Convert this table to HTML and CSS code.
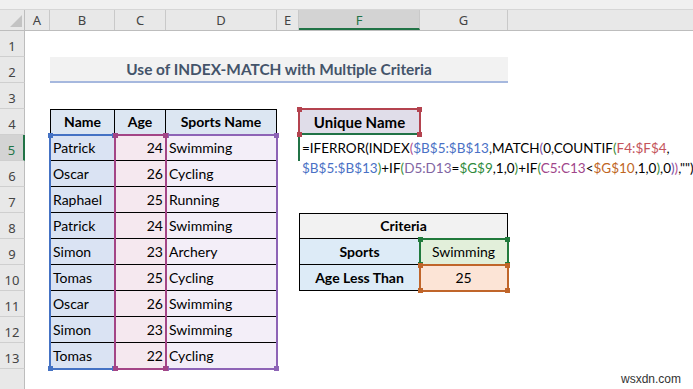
FILE: index.html
```html
<!DOCTYPE html>
<html lang="en">
  <head>
    <meta charset="UTF-8" />
    <meta name="viewport" content="width=device-width, initial-scale=1.0" />
    <title>INDEX-MATCH with Multiple Criteria</title>
    <link rel="stylesheet" href="styles.css">
  </head>
  <body>
    <div class="sheet">
      <div class="strip"></div>
      <div class="corner"></div>

      <div class="colheads">
        <div class="colhead col-a">A</div>
        <div class="colhead col-b">B</div>
        <div class="colhead col-c">C</div>
        <div class="colhead col-d">D</div>
        <div class="colhead col-e">E</div>
        <div class="colhead col-f current">F</div>
        <div class="colhead col-g">G</div>
      </div>

      <div class="rowheads">
        <div class="rowhead">1</div>
        <div class="rowhead">2</div>
        <div class="rowhead">3</div>
        <div class="rowhead">4</div>
        <div class="rowhead current">5</div>
        <div class="rowhead">6</div>
        <div class="rowhead">7</div>
        <div class="rowhead">8</div>
        <div class="rowhead">9</div>
        <div class="rowhead">10</div>
        <div class="rowhead">11</div>
        <div class="rowhead">12</div>
        <div class="rowhead">13</div>
        <div class="rowhead rest"></div>
      </div>

      <div class="cells">
        <div class="title">Use of INDEX-MATCH with Multiple Criteria</div>

        <div class="data">
          <div class="th first">Name</div><div class="th">Age</div><div class="th">Sports Name</div>
          <div class="td name">Patrick</div><div class="td age">24</div><div class="td sport">Swimming</div>
          <div class="td name">Oscar</div><div class="td age">26</div><div class="td sport">Cycling</div>
          <div class="td name">Raphael</div><div class="td age">25</div><div class="td sport">Running</div>
          <div class="td name">Patrick</div><div class="td age">24</div><div class="td sport">Swimming</div>
          <div class="td name">Simon</div><div class="td age">23</div><div class="td sport">Archery</div>
          <div class="td name">Tomas</div><div class="td age">25</div><div class="td sport">Cycling</div>
          <div class="td name">Oscar</div><div class="td age">26</div><div class="td sport">Swimming</div>
          <div class="td name">Simon</div><div class="td age">23</div><div class="td sport">Swimming</div>
          <div class="td name">Tomas</div><div class="td age">22</div><div class="td sport">Cycling</div>
          <div class="range range-b"></div>
          <div class="range range-d"></div>
          <div class="range range-c"></div>
        </div>

        <div class="unique">Unique Name</div>
        <div class="formula">=IFERROR(INDEX<span class="p-pink">(</span><span class="ref-blue">$B$5:$B$13</span>,MATCH<span class="p-purple">(</span>0,COUNTIF<span class="p-green">(</span><span class="ref-red">F4:$F$4</span>,<br><span class="ref-blue">$B$5:$B$13</span><span class="p-green">)</span>+IF<span class="p-green">(</span><span class="ref-purple">D5:D13</span>=<span class="ref-green">$G$9</span>,1,0<span class="p-green">)</span>+IF<span class="p-green">(</span><span class="ref-magenta">C5:C13</span>&lt;<span class="ref-orange">$G$10</span>,1,0<span class="p-green">)</span>,0<span class="p-purple">)</span><span class="p-pink">)</span>,"")</div>
        <div class="active-cell"></div>
        <div class="range range-unique"></div>

        <div class="criteria">
          <div class="cr-head">Criteria</div>
          <div class="cr-label">Sports</div><div class="cr-value sport-value">Swimming</div>
          <div class="cr-label">Age Less Than</div><div class="cr-value age-value">25</div>
          <div class="range range-g9"></div>
          <div class="range range-g10"></div>
        </div>
      </div>

      <div class="watermark">wsxdn.com</div>
    </div>
  </body>
</html>
```

FILE: styles.css
```css
* {
  box-sizing: border-box;
}
body {
  margin: 0;
  background: #fff;
  font-family: Lato, "Open Sans", sans-serif;
  color: #000;
}
.sheet {
  position: relative;
  display: grid;
  grid-template-columns: 25px 1fr;
  grid-template-rows: 10px 21px 1fr;
  width: 693px;
  height: 389px;
  overflow: hidden;
}
.strip {
  grid-column: 1 / -1;
  background: #f0f0f0;
  border-bottom: 1px solid #d6d6d6;
}
.corner {
  position: relative;
  background: #e8e8e8;
  border-right: 1px solid #bdbdbd;
  border-bottom: 1px solid #bdbdbd;
}
.corner::after {
  content: "";
  position: absolute;
  right: 2px;
  bottom: 3px;
  border-left: 12px solid transparent;
  border-bottom: 12px solid #c3c3c3;
}

/* column letters */
.colheads {
  display: flex;
  background: #e8e8e8;
  border-bottom: 1px solid #bdbdbd;
}
.colhead {
  border-right: 1px solid #c9c9c9;
  text-align: center;
  font-family: "Noto Sans", sans-serif;
  font-size: 13px;
  line-height: 20px;
  color: #444;
}
.col-a { width: 25px; }
.col-b { width: 65px; }
.col-c { width: 51px; }
.col-d { width: 111px; }
.col-e { width: 22px; }
.col-f { width: 121px; }
.col-g { width: 88px; }
.colhead.current {
  background: #d3d3d3;
  border-bottom: 2px solid #217346;
  color: #217346;
}

/* row numbers */
.rowheads {
  display: flex;
  flex-direction: column;
  background: #e8e8e8;
}
.rowhead {
  height: 26px;
  flex: none;
  padding-top: 5px;
  border-right: 1px solid #bdbdbd;
  border-bottom: 1px solid #cfcfcf;
  text-align: center;
  font-family: "Noto Sans", sans-serif;
  font-size: 13px;
  line-height: 20px;
  color: #444;
}
.rowhead.current {
  background: #d3d3d3;
  border-right: 2px solid #217346;
  color: #217346;
}
.rowhead.rest {
  flex: 1;
  border-bottom: none;
}

/* worksheet area */
.cells {
  position: relative;
  display: grid;
  grid-template-columns: 25px 65px 51px 111px 22px 121px 88px 1fr;
  grid-template-rows: repeat(13, 26px) 1fr;
  font-size: 14px;
}
.title {
  grid-column: 2 / 8;
  grid-row: 2 / 3;
  background: #f2f2f2;
  border-bottom: 2px solid #a6b8de;
  color: #44546a;
  font-weight: 700;
  font-size: 15.4px;
  text-align: center;
  line-height: 25px;
}

.data {
  grid-column: 2 / 5;
  grid-row: 4 / 14;
  position: relative;
  display: grid;
  grid-template-columns: 65px 51px 111px;
  grid-template-rows: repeat(10, 26px);
}
.th {
  background: #dce6f2;
  border-top: 1px solid #000;
  border-right: 1px solid #000;
  border-bottom: 1px solid #000;
  font-weight: 700;
  text-align: center;
  line-height: 24px;
}
.th.first {
  border-left: 1px solid #000;
}
.td {
  border-right: 1px solid #000;
  border-bottom: 1px solid #000;
  line-height: 25px;
  white-space: nowrap;
}
.name {
  background: #dae3f3;
  border-left: 1px solid #000;
  padding-left: 2px;
}
.age {
  background: #f5e8ef;
  text-align: right;
  padding-right: 2px;
}
.sport {
  background: #f3eef8;
  padding-left: 3px;
}

/* coloured range outlines */
.range {
  position: absolute;
  top: -1px;
  right: -1px;
  bottom: -1px;
  left: -1px;
  border: 2px solid var(--c);
}
.range::before {
  content: "";
  position: absolute;
  z-index: 1;
  top: -3px;
  right: -3px;
  bottom: -3px;
  left: -3px;
  background:
    linear-gradient(var(--c), var(--c)) left top / 5px 5px no-repeat,
    linear-gradient(var(--c), var(--c)) right top / 5px 5px no-repeat,
    linear-gradient(var(--c), var(--c)) left bottom / 5px 5px no-repeat,
    linear-gradient(var(--c), var(--c)) right bottom / 5px 5px no-repeat;
}
.range-b { --c: #4472c4; grid-column: 1 / 2; grid-row: 2 / 11; }
.range-c { --c: #a34586; grid-column: 2 / 3; grid-row: 2 / 11; }
.range-d { --c: #8d63b6; grid-column: 3 / 4; grid-row: 2 / 11; }
.range-unique {
  --c: #b4434f;
  grid-column: 6 / 7;
  grid-row: 4 / 5;
  border-bottom-color: transparent;
}
.range-g9 { --c: #217a3c; grid-column: 2 / 3; grid-row: 2 / 3; }
.range-g10 { --c: #c0652a; grid-column: 2 / 3; grid-row: 3 / 4; }

.unique {
  grid-column: 6 / 7;
  grid-row: 4 / 5;
  background: #e0dde9;
  font-weight: 700;
  font-size: 15px;
  text-align: center;
  line-height: 26px;
}
.active-cell {
  position: absolute;
  grid-column: 6 / 7;
  grid-row: 5 / 6;
  top: -2px;
  left: -1px;
  right: 0;
  bottom: 0;
  border-top: 2px solid #217346;
  border-left: 2px solid #217346;
}
.formula {
  grid-column: 6 / 9;
  grid-row: 5 / 7;
  padding: 3px 0 0 3px;
  font-size: 13.5px;
  line-height: 20px;
  white-space: nowrap;
}
.ref-blue { color: #4a71c5; }
.ref-red { color: #c4545c; }
.ref-purple { color: #8064a2; }
.ref-green { color: #2f8a3c; }
.ref-magenta { color: #a0458a; }
.ref-orange { color: #c0661f; }
.p-pink { color: #b0508f; }
.p-purple { color: #7a4fa8; }
.p-green { color: #3a8d3a; }

.criteria {
  grid-column: 6 / 8;
  grid-row: 8 / 11;
  position: relative;
  display: grid;
  grid-template-columns: 121px 88px;
  grid-template-rows: repeat(3, 26px);
}
.cr-head {
  grid-column: 1 / 3;
  background: #f2f2f2;
  border: 1px solid #000;
  font-weight: 700;
  text-align: center;
  line-height: 24px;
}
.cr-label {
  background: #ddebf7;
  border-left: 1px solid #000;
  border-right: 1px solid #000;
  border-bottom: 1px solid #000;
  font-weight: 700;
  text-align: center;
  line-height: 25px;
}
.cr-value {
  border-right: 1px solid #000;
  border-bottom: 1px solid #000;
  text-align: center;
  line-height: 25px;
}
.sport-value { background: #e2efda; }
.age-value { background: #fce4d6; }

.watermark {
  position: absolute;
  right: 12px;
  bottom: 3px;
  font-family: "Liberation Sans", sans-serif;
  font-size: 12px;
  color: #333;
}
```
